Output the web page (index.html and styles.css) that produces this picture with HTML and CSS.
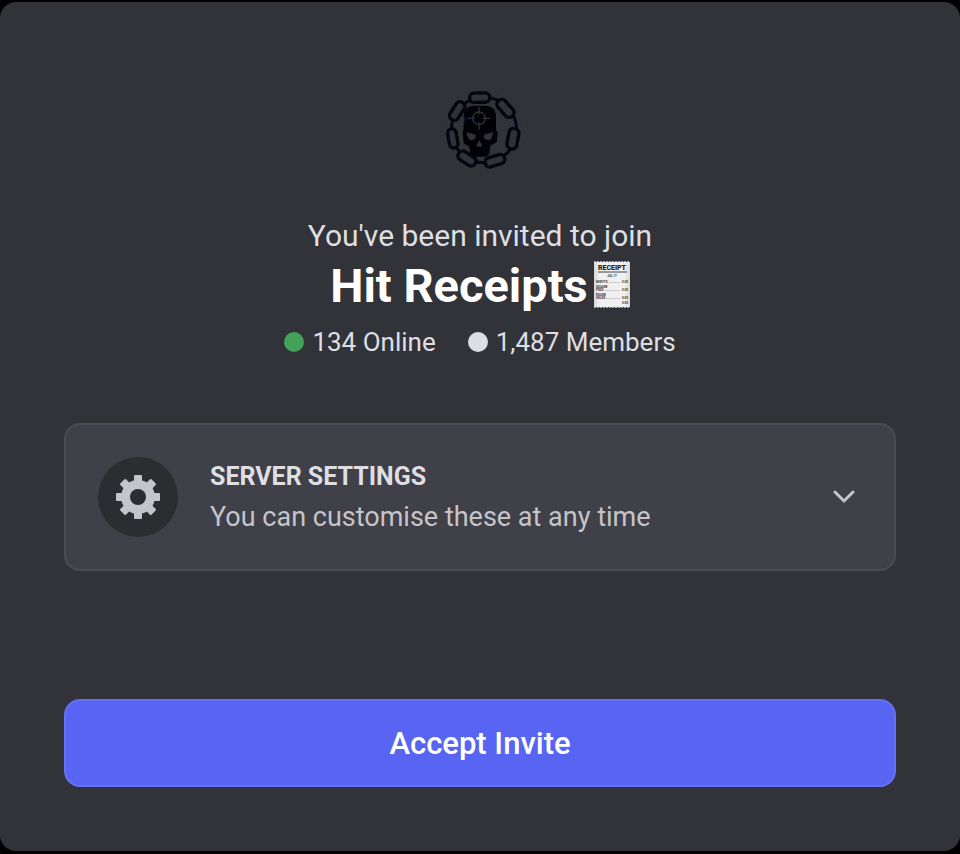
FILE: index.html
```html
<!DOCTYPE html>
<html lang="en">
<head>
    <meta charset="UTF-8">
    <meta name="viewport" content="width=device-width, initial-scale=1.0">
    <title>Hit Receipts</title>
    <link rel="stylesheet" href="styles.css">
</head>
<body>

    <main class="invite">
        <header class="invite-header">
            <svg class="server-icon" viewBox="32 30 240 240" aria-hidden="true">
                <!-- Chain -->
                <g fill="none" stroke="#02060d" stroke-width="10">
                    <circle cx="152" cy="150" r="98" stroke-width="9"/>
                    <g fill="#303237">
                        <rect x="109" y="39" width="60" height="28" rx="13" transform="rotate(-1 138 52)"/>
                        <rect x="186" y="70" width="62" height="29" rx="14" transform="rotate(48 216 84)"/>
                        <rect x="209" y="160" width="62" height="30" rx="14" transform="rotate(100 239 175)"/>
                        <rect x="155" y="228" width="60" height="28" rx="13" transform="rotate(-17 185 243)"/>
                        <rect x="72" y="221" width="58" height="28" rx="13" transform="rotate(33 100 235)"/>
                        <rect x="31" y="160" width="58" height="26" rx="13" transform="rotate(80 58 173)"/>
                        <rect x="42" y="80" width="60" height="28" rx="13" transform="rotate(-57 71 94)"/>
                    </g>
                </g>
                <g fill="none" stroke="#082f50" stroke-width="3" stroke-dasharray="3 17">
                    <circle cx="152" cy="150" r="111"/>
                    <circle cx="152" cy="150" r="92"/>
                </g>
                <!-- Skull -->
                <path fill="#010205" d="M91 145V108Q92 78 121 77H158Q187 79 188 108V151L193 156L190 187L171 197L168 222L158 230H121L111 222L108 201L91 190L88 158Z"/>
                <g fill="#303237">
                    <path d="M99 156L128 164L126 176Q119 181 111 180Q103 178 99 156Z"/>
                    <path d="M179 156L151 164L153 176Q161 181 168 180Q177 178 179 156Z"/>
                    <path d="M138 180L147 198L140 201L138 197L136 201L129 198Z"/>
                </g>
                <g fill="none" stroke="#303237" stroke-width="4">
                    <circle cx="137" cy="115" r="19"/>
                    <path d="M137 81v22M137 127v22M103 115h22M149 115h22"/>
                </g>
                <path fill="none" stroke="#0755a0" stroke-width="2" d="M92 110v17"/>
            </svg>

            <p class="invite-text">You've been invited to join</p>
            <h1 class="server-name">
                Hit Receipts
                <svg class="receipt" viewBox="0 0 36 47" role="img" aria-label="Receipt">
                    <defs>
                        <linearGradient id="paper">
                            <stop offset="0" stop-color="#d8d8d8"/>
                            <stop offset=".15" stop-color="#f0f0f0"/>
                            <stop offset=".85" stop-color="#f0f0f0"/>
                            <stop offset="1" stop-color="#d8d8d8"/>
                        </linearGradient>
                    </defs>
                    <path fill="url(#paper)" d="M0 1h36v45H0z"/>
                    <path stroke="#aaa" stroke-dasharray="2 1" d="M0 .5h36M0 46.5h36"/>
                    <text class="receipt-title" x="18" y="9" text-anchor="middle">RECEIPT</text>
                    <path fill="#999" d="M4 10h29v2H4z"/>
                    <g class="receipt-rows">
                        <text x="18" y="16" text-anchor="middle">JUL 17</text>
                        <text x="2" y="22">MISFITS</text>
                        <text x="2" y="27">SQUARE</text>
                        <text x="2" y="30">PEGS</text>
                        <text x="2" y="35">ROUND</text>
                        <text x="2" y="38">HOLES</text>
                        <text x="28" y="22">0.00</text>
                        <text x="28" y="30">0.00</text>
                        <text x="28" y="38">0.00</text>
                        <text x="28" y="43">0.00</text>
                    </g>
                    <path stroke="#aaa" stroke-width=".5" d="M15 21.5h11M11 29.5h15M12 37.5h14"/>
                </svg>
            </h1>
            <div class="stats">
                <span class="stat"><i class="dot online"></i>134 Online</span>
                <span class="stat"><i class="dot"></i>1,487 Members</span>
            </div>
        </header>

        <button class="settings" type="button" aria-expanded="false">
            <span class="settings-icon">
                <svg viewBox="0 0 44 44" aria-hidden="true">
                    <g fill="#c4c5ca">
                        <circle cx="22" cy="22" r="17"/>
                        <g id="teeth">
                            <rect x="18" y="0" width="8" height="44" rx="1"/>
                            <rect x="0" y="18" width="44" height="8" rx="1"/>
                        </g>
                        <use href="#teeth" transform="rotate(45 22 22)"/>
                    </g>
                    <circle cx="22" cy="22" r="8" fill="#2b2d31"/>
                </svg>
            </span>
            <span class="settings-text">
                <span class="settings-title">Server Settings</span>
                <span class="settings-note">You can customise these at any time</span>
            </span>
            <svg class="chevron" viewBox="0 0 24 16" aria-hidden="true">
                <path d="M3 3l9 9 9-9"/>
            </svg>
        </button>

        <button class="accept-btn" type="button">Accept Invite</button>
    </main>

</body>
</html>
```

FILE: styles.css
```css
:root {
    --bg: #313338;
    --card: #404048;
    --text: #dedfe2;
    --muted: #c4c5ca;
    --accent: #5865f2;
}

* {
    box-sizing: border-box;
}

body {
    margin: 0;
    padding: 2px 0;
    min-height: 100vh;
    background: #000;
    color: var(--text);
    font-family: Roboto, sans-serif;
}

.invite {
    padding: 88px 64px 64px;
    border-radius: 16px;
    background: var(--bg);
}

/* Server details */
.invite-header {
    display: flex;
    flex-direction: column;
    align-items: center;
}

.server-icon {
    width: 80px;
    height: 80px;
    margin: 0 0 46px 8px;
}

.invite-text {
    margin: 0;
    font-size: 30px;
    line-height: 40px;
}

.server-name {
    display: flex;
    align-items: center;
    gap: 6px;
    margin: 2px 0 4px;
    color: #fff;
    font-size: 47px;
    font-weight: 700;
    line-height: 56px;
}

.receipt {
    width: 36px;
    height: 47px;
    margin-bottom: 4px;
}

.receipt-title {
    font-size: 7px;
    font-weight: 900;
    fill: #222;
}

.receipt-rows {
    font-size: 3px;
    fill: #333;
}

.stats {
    display: flex;
    gap: 32px;
    font-size: 26px;
    line-height: 48px;
}

.stat {
    display: flex;
    align-items: center;
    gap: 8px;
}

.dot {
    width: 20px;
    height: 20px;
    border-radius: 50%;
    background: var(--text);
}

.dot.online {
    background: #43a25a;
}

/* Settings */
.settings {
    display: flex;
    align-items: center;
    gap: 32px;
    width: 100%;
    margin-top: 57px;
    padding: 32px;
    border: 2px solid #4b4b53;
    border-radius: 16px;
    background: var(--card);
    font-family: inherit;
    text-align: left;
    cursor: pointer;
}

.settings-icon {
    display: flex;
    align-items: center;
    justify-content: center;
    width: 80px;
    height: 80px;
    border-radius: 50%;
    background: #2b2d31;
}

.settings-icon svg {
    width: 44px;
    height: 44px;
}

.settings-text {
    flex: 1;
}

.settings-title,
.settings-note {
    display: block;
    line-height: 40px;
}

.settings-title {
    color: var(--text);
    font-size: 25px;
    font-weight: 700;
    text-transform: uppercase;
}

.settings-note {
    color: var(--muted);
    font-size: 27px;
}

.chevron {
    width: 24px;
    height: 16px;
    margin-right: 6px;
    fill: none;
    stroke: var(--muted);
    stroke-width: 3;
    stroke-linecap: round;
    stroke-linejoin: round;
}

/* Accept */
.accept-btn {
    width: 100%;
    height: 88px;
    margin-top: 128px;
    border: 2px solid #6571f3;
    border-radius: 16px;
    background: var(--accent);
    color: #fff;
    font-family: inherit;
    font-size: 31px;
    font-weight: 500;
    cursor: pointer;
}
```
